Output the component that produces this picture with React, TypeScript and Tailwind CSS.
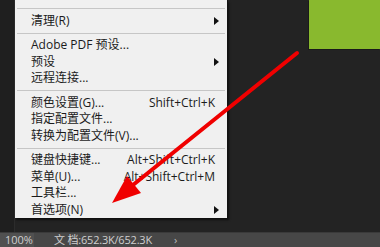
import React from 'react';

type Row = { label: string; shortcut?: string; sub?: boolean };

const groups: Row[][] = [
  [{ label: '清理(R)', sub: true }],
  [{ label: 'Adobe PDF 预设...' }, { label: '预设', sub: true }, { label: '远程连接...' }],
  [
    { label: '颜色设置(G)...', shortcut: 'Shift+Ctrl+K' },
    { label: '指定配置文件...' },
    { label: '转换为配置文件(V)...' },
  ],
  [
    { label: '键盘快捷键...', shortcut: 'Alt+Shift+Ctrl+K' },
    { label: '菜单(U)...', shortcut: 'Alt+Shift+Ctrl+M' },
    { label: '工具栏...' },
    { label: '首选项(N)', sub: true },
  ],
];

const Separator = () => (
  <div className="h-[8px] flex items-center pl-[2px] pr-[2px]">
    <div className="h-px w-full bg-[#c6c6c6]" />
  </div>
);

const MenuRow = ({ row }: { row: Row }) => (
  <div className="h-[16.5px] flex items-center pl-[16px] pr-[12px] text-[12px] text-[#1b1b1b]">
    <span className="flex-1 whitespace-nowrap">{row.label}</span>
    {row.shortcut && <span className="whitespace-nowrap">{row.shortcut}</span>}
    {row.sub && (
      <svg width="5" height="8" viewBox="0 0 5 8" className="mr-[-4px] ml-1">
        <path d="M0 0 L5 4 L0 8 Z" fill="#111" />
      </svg>
    )}
  </div>
);

export default function App() {
  return (
    <div
      className="relative w-[380px] h-[247px] bg-[#232323] flex flex-col overflow-hidden"
      style={{ fontFamily: '"Open Sans", "Noto Sans CJK SC", sans-serif' }}
    >
      <div className="flex-1 flex min-h-0">
        <div className="w-[15px] bg-[#1f1f1f] border-r border-[#2c2c2c]" />
        <div className="flex flex-col">
          <div className="w-[213px] h-[218px] bg-[#f0f0f0] border-r border-[#121212] flex flex-col pt-[4.5px] overflow-hidden shadow-[1px_2px_2px_rgba(0,0,0,0.6)]">
            <Separator />
            {groups.map((g, i) => (
              <React.Fragment key={i}>
                {i > 0 && <Separator />}
                {g.map((r) => (
                  <MenuRow key={r.label} row={r} />
                ))}
              </React.Fragment>
            ))}
          </div>
        </div>
        <div className="flex-1 flex justify-end">
          <div className="w-[71px] h-[49px] bg-[#89b92e] shadow-[-1px_1px_0_#1a1a1a]" />
        </div>
      </div>
      <div className="h-[15px] bg-[#474747] flex items-center text-[11px] text-[#cfcfcf] border-t border-[#3a3a3a]">
        <span className="w-[34px] pl-[5px] bg-[#505050] h-full flex items-center">100%</span>
        <span className="ml-[20px] tracking-[-0.2px]">文 档:652.3K/652.3K</span>
        <span className="ml-[22px] text-[#bdbdbd]">›</span>
      </div>
      <svg className="absolute inset-0 pointer-events-none" width="380" height="247" viewBox="0 0 380 247">
        <line x1="297" y1="53" x2="128" y2="189" stroke="#f00000" strokeWidth="4" strokeLinecap="round" />
        <polygon points="112,203 127,176 141,193" fill="#f00000" />
      </svg>
    </div>
  );
}
